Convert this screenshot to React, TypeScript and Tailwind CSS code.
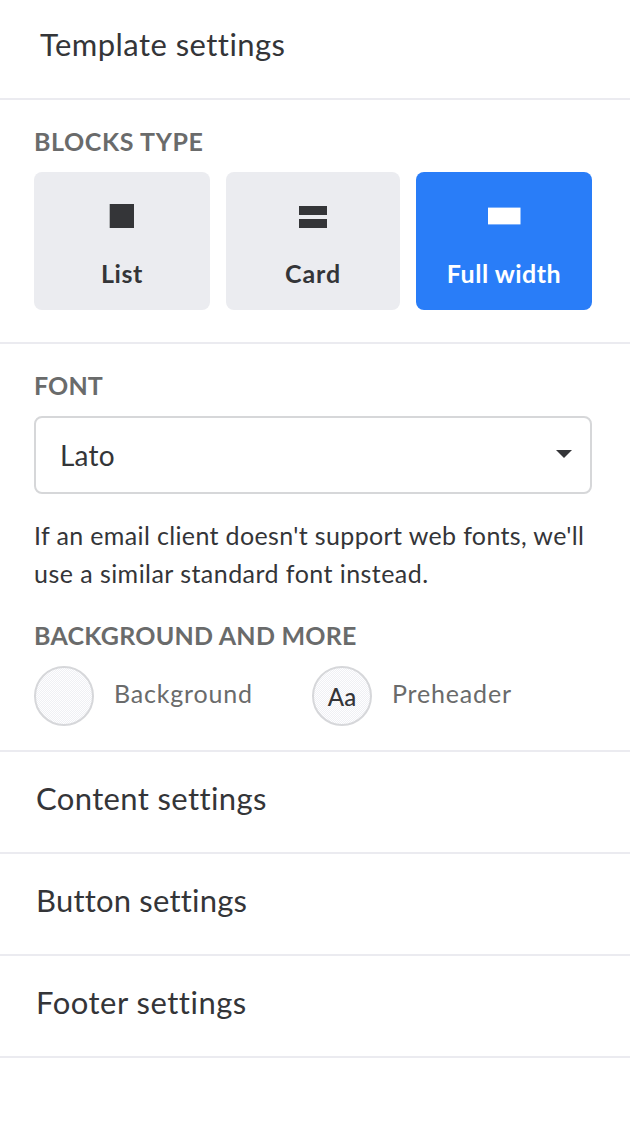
import { clsx } from 'clsx'

const blockTypes = [
  { id: 'list', label: 'List', width: 'w-44', spacing: 'tracking-[0.6px]' },
  { id: 'card', label: 'Card', width: 'w-[174px]', spacing: 'tracking-[0.95px]' },
  { id: 'full', label: 'Full width', width: 'w-44', spacing: 'tracking-[0.5px]' },
]

const sections = [
  { title: 'Content settings', spacing: 'tracking-[0.37px]' },
  { title: 'Button settings', spacing: 'tracking-[0.2px]' },
  { title: 'Footer settings', spacing: 'tracking-[0.5px]' },
]

function BlockIcon({ id }: { id: string }) {
  return (
    <svg width="34" height="26" viewBox="0 0 34 26" fill="currentColor">
      {id === 'list' && <rect x="4.7" y="1" width="24.3" height="24" />}
      {id === 'card' && <path d="M3 3h28v9H3zM3 16h28v9H3z" />}
      {id === 'full' && <rect x="1" y="4.6" width="32.5" height="16.8" />}
    </svg>
  )
}

function Swatch({ children }: { children?: string }) {
  return (
    <span className="flex h-[60px] w-[60px] items-center justify-center rounded-full border-2 border-[#d6d7da] bg-[repeating-conic-gradient(#eff0f4_0_25%,#fefeff_0_50%)] bg-size-[2px_2px] pt-0.5 text-2xl font-medium text-[#343538]">
      {children}
    </span>
  )
}

export default function App() {
  const selected = 'full'

  return (
    <main className="min-h-[1124px] w-[630px] bg-white font-['Lato',sans-serif] text-[#343538]">
      <header className="h-[100px] border-b-2 border-[#ebebf0] pt-[26px] pl-10">
        <h1 className="text-[31px] leading-9 tracking-[0.45px]">Template settings</h1>
      </header>

      <section className="h-[244px] border-b-2 border-[#ebebf0] px-[34px] pt-[26px]">
        <h2 className="text-[25px] leading-[30px] font-bold tracking-[0.62px] text-[#6a6b6b]">BLOCKS TYPE</h2>
        <div className="mt-4 flex gap-4">
          {blockTypes.map(({ id, label, width, spacing }) => (
            <button
              key={id}
              className={clsx(
                'flex h-[138px] shrink-0 flex-col items-center rounded-lg pt-[31px]',
                width,
                id === selected ? 'bg-[#297df8] text-white' : 'bg-[#ebecf0]'
              )}
            >
              <BlockIcon id={id} />
              <span className={clsx('mt-[29px] text-[25px] leading-[30px] font-bold', spacing)}>{label}</span>
            </button>
          ))}
        </div>
      </section>

      <section className="border-b-2 border-[#ebebf0] px-[34px] pt-[26px] pb-6">
        <h2 className="text-[25px] leading-[30px] font-bold tracking-[0.1px] text-[#6a6b6b]">FONT</h2>
        <button className="mt-4 flex h-[78px] w-[558px] items-center justify-between rounded-lg border-2 border-[#d6d7d9] pr-[18px] pl-6">
          <span className="text-[28px] leading-9 tracking-[0.2px]">Lato</span>
          <svg width="16" height="8" viewBox="0 0 16 8" fill="currentColor" className="-mt-0.5">
            <path d="M0 0h16L8 8z" />
          </svg>
        </button>
        <p className="mt-[22px] text-[25px] leading-[38px] whitespace-nowrap">
          <span className="tracking-[0.36px]">If an email client doesn't support web fonts, we'll</span>
          <br />
          <span className="tracking-[0.45px]">use a similar standard font instead.</span>
        </p>

        <h2 className="mt-7 text-[25px] leading-[30px] font-bold tracking-[0.25px] text-[#6a6b6b]">BACKGROUND AND MORE</h2>
        <div className="mt-4 flex text-[25px] text-[#6a6b6b]">
          <div className="flex w-[278px] gap-5">
            <Swatch />
            <span className="mt-3 leading-[30px] tracking-[0.8px]">Background</span>
          </div>
          <div className="flex gap-5">
            <Swatch>Aa</Swatch>
            <span className="mt-3 leading-[30px] tracking-[0.83px]">Preheader</span>
          </div>
        </div>
      </section>

      {sections.map(({ title, spacing }) => (
        <section key={title} className="h-[102px] border-b-2 border-[#ebebf0] pt-7 pl-9">
          <h2 className={clsx('text-[31px] leading-9', spacing)}>{title}</h2>
        </section>
      ))}
    </main>
  )
}
